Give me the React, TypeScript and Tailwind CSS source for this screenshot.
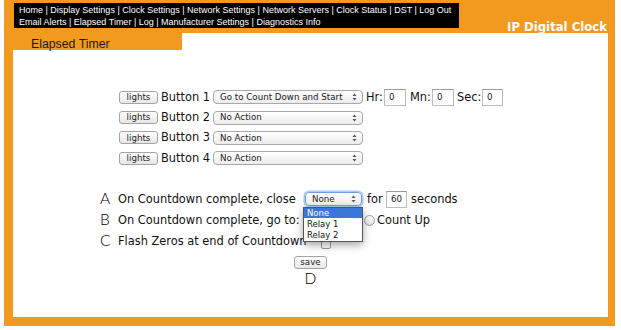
const navTop = ['Home', 'Display Settings', 'Clock Settings', 'Network Settings', 'Network Servers', 'Clock Status', 'DST', 'Log Out']
const navBottom = ['Email Alerts', 'Elapsed Timer', 'Log', 'Manufacturer Settings', 'Diagnostics Info']

const buttonRows = [
  { n: 1, action: 'Go to Count Down and Start' },
  { n: 2, action: 'No Action' },
  { n: 3, action: 'No Action' },
  { n: 4, action: 'No Action' },
]

function Arrows() {
  return (
    <svg width="5" height="8" viewBox="0 0 5 8" className="shrink-0">
      <path d="M2.5 0.5 L4.5 3 L0.5 3 Z" fill="#555" />
      <path d="M2.5 7.5 L4.5 5 L0.5 5 Z" fill="#555" />
    </svg>
  )
}

function Select({ label, width, focused = false }: { label: string; width: string; focused?: boolean }) {
  return (
    <div
      className={`flex items-center justify-between h-[14px] ${width} rounded-[4px] border bg-gradient-to-b from-white to-[#ececec] pl-[6px] pr-[5px] text-[8.7px] leading-none text-[#222] font-['DejaVu_Sans',sans-serif] ${
        focused ? 'border-[#6f9fdc] shadow-[0_0_0_1.5px_#a9c8f2]' : 'border-[#a9a9a9]'
      }`}
    >
      <span className="truncate">{label}</span>
      <Arrows />
    </div>
  )
}

function MacButton({ label, width }: { label: string; width: string }) {
  return (
    <button className={`h-[13px] ${width} rounded-[3px] border border-[#a3a3a3] bg-gradient-to-b from-white to-[#e6e6e6] text-[8.7px] leading-none text-[#222] font-['DejaVu_Sans',sans-serif]`}>
      {label}
    </button>
  )
}

function NumBox({ value, width }: { value: string; width: string }) {
  return (
    <input
      readOnly
      value={value}
      className={`h-[17px] ${width} border border-[#bdbdbd] border-t-[#9a9a9a] bg-white pl-[4px] text-[8.7px] text-[#222] font-['DejaVu_Sans',sans-serif] outline-none`}
    />
  )
}

export default function App() {
  return (
    <div className="w-[621px] h-[330px] bg-white pl-[4px] font-['Liberation_Sans',Arial,sans-serif]">
      <div className="w-[611px] h-[326px] bg-[#f29a1f] pl-[9px] flex flex-col">
        <header className="h-[33px] flex items-start justify-between">
          <nav className="mt-[3px] ml-[1px] w-[445px] h-[25px] bg-black text-white text-[9px] leading-[12px] pl-[5px] pt-[1px] whitespace-nowrap">
            <div>{navTop.join(' | ')}</div>
            <div>{navBottom.join(' | ')}</div>
          </nav>
          <div className="mt-[22px] mr-[8px] text-white font-bold text-[11.7px] leading-[11px] font-['DejaVu_Sans',sans-serif]">
            IP Digital Clock
          </div>
        </header>

        <main className="w-[595px] h-[284px] bg-white flex flex-col">
          <div className="w-[169px] h-[17px] bg-[#f29a1f] pl-[18px] text-[12.3px] leading-[22px] text-[#1a1a1a]">
            Elapsed Timer
          </div>

          {/* button assignments */}
          <div className="mt-[37px] pl-[106px] flex flex-col font-['DejaVu_Sans',sans-serif] text-[11.4px] text-[#111]">
            {buttonRows.map((row) => (
              <div key={row.n} className="h-[20.4px] flex items-center">
                <MacButton label="lights" width="w-[39px]" />
                <span className="ml-[3px] w-[49px] whitespace-nowrap">Button {row.n}</span>
                <div className="ml-[3px]">
                  <Select label={row.action} width="w-[150px]" />
                </div>
                {row.n === 1 && (
                  <>
                    <span className="ml-[3px] w-[18px]">Hr:</span>
                    <NumBox value="0" width="w-[22px]" />
                    <span className="ml-[4px] w-[22px]">Mn:</span>
                    <NumBox value="0" width="w-[22px]" />
                    <span className="ml-[3px] w-[25px]">Sec:</span>
                    <NumBox value="0" width="w-[21px]" />
                  </>
                )}
              </div>
            ))}
          </div>

          {/* countdown options */}
          <div className="mt-[20px] pl-[87px] flex flex-col font-['DejaVu_Sans',sans-serif] text-[11.4px] text-[#111]">
            <div className="h-[21px] flex items-center">
              <span className="w-[18px] font-['Lato','Open_Sans',sans-serif] font-light text-[15.5px] text-black">A</span>
              <span className="w-[187px] whitespace-nowrap">On Countdown complete, close</span>
              <div className="relative">
                <Select label="None" width="w-[57px]" focused />
                <div className="absolute z-10 top-[15px] left-[-2px] w-[60px] border border-[#555] bg-white shadow-[0_3px_8px_rgba(0,0,0,0.35)] text-[8.5px] leading-[11px] text-[#111]">
                  <div className="bg-[#3b76d9] text-white pl-[3px] h-[10px] leading-[10px]">None</div>
                  <div className="pl-[3px] pt-[1px]">Relay 1</div>
                  <div className="pl-[3px]">Relay 2</div>
                </div>
              </div>
              <span className="ml-[5px] w-[19px]">for</span>
              <NumBox value="60" width="w-[21px]" />
              <span className="ml-[4px]">seconds</span>
            </div>

            <div className="h-[21px] flex items-center">
              <span className="w-[18px] font-['Lato','Open_Sans',sans-serif] font-light text-[15.5px] text-black">B</span>
              <span className="w-[246px] whitespace-nowrap">On Countdown complete, go to:</span>
              <span className="w-[11px] h-[11px] rounded-full border border-[#9c9c9c] bg-gradient-to-b from-white to-[#e4e4e4]" />
              <span className="ml-[2px]">Count Up</span>
            </div>

            <div className="h-[21px] flex items-center">
              <span className="w-[18px] font-['Lato','Open_Sans',sans-serif] font-light text-[15.5px] text-black">C</span>
              <span className="whitespace-nowrap">Flash Zeros at end of Countdown</span>
              <span className="ml-[14px] mt-[6px] w-[10px] h-[10px] rounded-[2px] border border-[#9c9c9c] bg-white" />
            </div>
          </div>

          <div className="mt-[4px] flex flex-col items-center">
            <MacButton label="save" width="w-[33px]" />
            <span className="mt-[1px] font-['Lato','Open_Sans',sans-serif] font-light text-[15.5px] leading-[17px] text-black">D</span>
          </div>
        </main>
      </div>
    </div>
  )
}
